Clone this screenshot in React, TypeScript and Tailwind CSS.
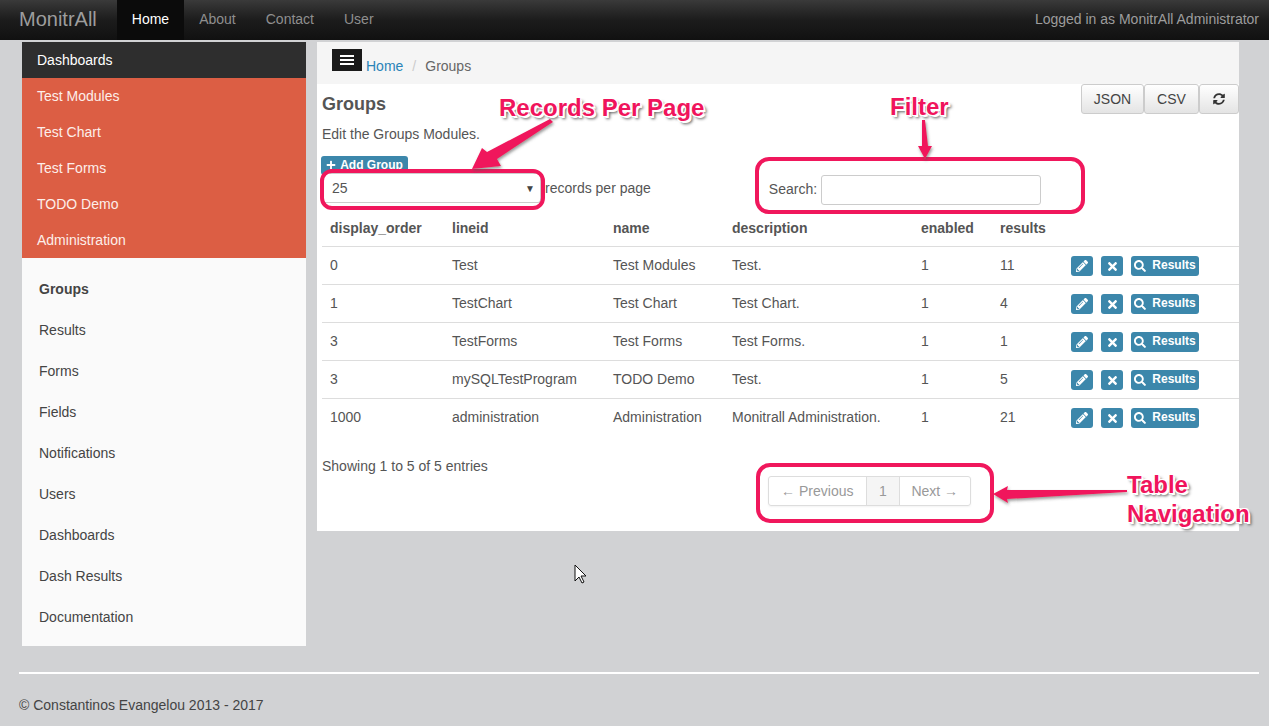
import React from "react";
import { FaPencilAlt, FaTimes, FaSearch, FaPlus, FaSyncAlt } from "react-icons/fa";

const rows = [
  ["0", "Test", "Test Modules", "Test.", "1", "11"],
  ["1", "TestChart", "Test Chart", "Test Chart.", "1", "4"],
  ["3", "TestForms", "Test Forms", "Test Forms.", "1", "1"],
  ["3", "mySQLTestProgram", "TODO Demo", "Test.", "1", "5"],
  ["1000", "administration", "Administration", "Monitrall Administration.", "1", "21"],
];
const heads = ["display_order", "lineid", "name", "description", "enabled", "results", ""];
const widths = ["w-[122px]", "w-[161px]", "w-[119px]", "w-[189px]", "w-[79px]", "w-[70px]", "w-auto"];
const orange = ["Test Modules", "Test Chart", "Test Forms", "TODO Demo", "Administration"];
const light = ["Results", "Forms", "Fields", "Notifications", "Users", "Dashboards", "Dash Results", "Documentation"];
const labelClass =
  "absolute font-bold text-[24px] leading-[29px] text-[#f0145c] whitespace-nowrap [text-shadow:-1px_-1px_0_#fff,1px_-1px_0_#fff,-1px_1px_0_#fff,1px_1px_0_#fff,2px_2px_0_#fff,3px_3px_3px_#555]";

function Blue({ children, className = "" }: { children: React.ReactNode; className?: string }) {
  return (
    <span className={`inline-flex items-center justify-center h-[19px] rounded-[3px] bg-[#3c87ab] text-white text-[12px] font-bold ${className}`}>
      {children}
    </span>
  );
}

export default function App() {
  return (
    <div className="relative h-[726px] overflow-hidden bg-[#d1d2d4] font-['Liberation_Sans',Arial,sans-serif] text-[14px] text-[#555]">
      <nav className="flex h-10 items-stretch bg-gradient-to-b from-[#3a3a3a] via-[#1c1c1c] to-[#111] pl-[19px] pr-[10px]">
        <div className="mr-5 flex items-center pb-[2px] text-[20px] text-[#9d9d9d]">MonitrAll</div>
        <div className="flex items-center bg-[#0b0b0b] px-[15px] pb-[2px] text-white">Home</div>
        {["About", "Contact", "User"].map((t) => (
          <div key={t} className="flex items-center px-[15px] pb-[2px] text-[#8f8f8f]">{t}</div>
        ))}
        <div className="ml-auto flex items-center pb-[2px] text-[#9d9d9d]">Logged in as MonitrAll Administrator</div>
      </nav>

      <div className="flex items-start pt-[2px] pl-[22px]">
        <aside className="w-[284px] shrink-0 bg-[#fafafa]">
          <div className="flex h-9 items-center bg-[#2e2e2e] pl-[15px] text-white">Dashboards</div>
          {orange.map((t) => (
            <div key={t} className="flex h-9 items-center bg-[#dc5e44] pl-[15px] text-[#fdeeea]">{t}</div>
          ))}
          <ul className="pt-[11px] pb-[8px] text-[#444]">
            <li className="flex h-[41px] items-center pl-[17px] font-bold">Groups</li>
            {light.map((t) => (
              <li key={t} className="flex h-[41px] items-center pl-[17px]">{t}</li>
            ))}
          </ul>
        </aside>

        <main className="ml-[11px] h-[489px] w-[922px] shrink-0 bg-white">
          <div className="flex h-[42px] items-start bg-[#f5f5f5] pl-[15px] pt-[7px]">
            <div className="flex h-[22px] w-[30px] flex-col items-center justify-center gap-[2px] bg-[#1a1a1a]">
              <span className="h-[2px] w-[14px] bg-white" />
              <span className="h-[2px] w-[14px] bg-white" />
              <span className="h-[2px] w-[14px] bg-white" />
            </div>
            <div className="ml-1 mt-[9px] flex leading-4">
              <span className="text-[#2a84b8]">Home</span>
              <span className="mx-[9px] text-[#ccc]">/</span>
              <span className="text-[#666]">Groups</span>
            </div>
          </div>

          <div className="flex h-[60px] items-start justify-between pl-[5px]">
            <div>
              <h2 className="mt-[10px] text-[18px] font-bold leading-5 text-[#555]">Groups</h2>
              <p className="mt-[10px] leading-5">Edit the Groups Modules.</p>
            </div>
            <div className="flex text-[#444]">
              {[["JSON", "w-[63px]"], ["CSV", "w-[55px]"]].map(([t, w]) => (
                <div key={t} className={`flex h-[30px] ${w} items-center justify-center rounded-[3px] border border-[#ccc] bg-gradient-to-b from-white to-[#e4e4e4]`}>{t}</div>
              ))}
              <div className="flex h-[30px] w-[40px] items-center justify-center rounded-[3px] border border-[#ccc] bg-gradient-to-b from-white to-[#e4e4e4]">
                <FaSyncAlt className="text-[12px] text-[#333]" />
              </div>
            </div>
          </div>

          <div className="mt-[12px] flex h-[19px] pl-1">
            <Blue className="w-[87px] gap-1 pb-[2px]">
              <FaPlus className="text-[10px]" /> Add Group
            </Blue>
          </div>
          <div className="relative -mt-[2px] flex h-[36px] items-start pl-[5px]">
            <div className="flex h-[30px] w-[219px] items-center justify-between rounded-[3px] border border-[#ccc] bg-white pl-[9px] pr-[5px]">
              <span>25</span>
              <span className="text-[10px] text-[#444]">▼</span>
            </div>
            <span className="ml-[4px] mt-[5px]">records per page</span>
            <div className="ml-[118px] mt-[2px] flex items-center">
              <span className="mr-[4px] pb-[2px]">Search:</span>
              <div className="h-[30px] w-[220px] rounded-[3px] border border-[#ccc] bg-white" />
            </div>
          </div>

          <table className="ml-[5px] w-[917px] table-fixed border-collapse">
            <thead>
              <tr className="h-[37px] border-b border-[#ddd] font-bold">
                {heads.map((h, i) => (
                  <th key={i} className={`${widths[i]} p-0 pl-2 pt-[2px] text-left`}>{h}</th>
                ))}
              </tr>
            </thead>
            <tbody>
              {rows.map((r, idx) => (
                <tr key={idx} className={`h-[38px] ${idx < 4 ? "border-b border-[#ddd]" : ""}`}>
                  {r.map((c, i) => (
                    <td key={i} className="p-0 pl-2">{c}</td>
                  ))}
                  <td className="p-0 pl-[9px] pt-[2px]">
                    <div className="flex items-center">
                      <Blue className="h-[20px] w-[22px] text-[11px]"><FaPencilAlt /></Blue>
                      <Blue className="ml-[8px] h-[20px] w-[22px] text-[13px]"><FaTimes /></Blue>
                      <Blue className="ml-[8px] h-[20px] w-[68px] gap-[6px] pb-[2px]"><FaSearch className="mt-[2px] text-[12px]" /> Results</Blue>
                    </div>
                  </td>
                </tr>
              ))}
            </tbody>
          </table>

          <div className="flex items-start pl-[5px] pt-[20px]">
            <span className="leading-5">Showing 1 to 5 of 5 entries</span>
            <div className="ml-[280px] mt-[20px] flex h-[30px] w-[203px] rounded-[3px] border border-[#ddd] text-[#999] shadow-[0_1px_2px_rgba(0,0,0,0.05)]">
              <div className="flex w-[98px] items-center justify-center border-r border-[#ddd]">← Previous</div>
              <div className="flex w-[33px] items-center justify-center border-r border-[#ddd] bg-[#f5f5f5]">1</div>
              <div className="flex flex-1 items-center justify-center">Next →</div>
            </div>
          </div>
        </main>
      </div>

      <footer className="ml-[19px] mr-[10px] mt-[26px] border-t-2 border-white pt-[21px] text-[#444]">
        © Constantinos Evangelou 2013 - 2017
      </footer>

      {/* annotations over the page */}
      <div className="pointer-events-none absolute left-[320px] top-[169px] h-[41px] w-[225px] rounded-[12px] border-4 border-[#f0175c]" />
      <div className="pointer-events-none absolute left-[755px] top-[157px] h-[57px] w-[330px] rounded-[14px] border-4 border-[#f0175c]" />
      <div className="pointer-events-none absolute left-[756px] top-[463px] h-[60px] w-[238px] rounded-[14px] border-4 border-[#f0175c]" />
      <svg className="pointer-events-none absolute left-0 top-0" width="1269" height="726">
        <defs>
          <filter id="s" x="-20%" y="-20%" width="140%" height="140%">
            <feDropShadow dx="1" dy="2" stdDeviation="1.5" floodColor="#555" floodOpacity="0.6" />
          </filter>
        </defs>
        <g fill="#f0175c" filter="url(#s)">
          <polygon points="550,119 553,122 497,159 501,166 472,169 482,148 487,152" />
          <polygon points="922,120 925,120 928,146 932,146 925,159 918,146 922,146" />
          <polygon points="1127,490 1127,492 1007,499 1008,503 993,494 1008,486 1007,490" />
        </g>
        <path d="M575 565 L575 581 L579 577 L582 583 L584 582 L581 576 L586 576 Z" fill="#fff" stroke="#111" strokeWidth="1" />
      </svg>
      <div className={`${labelClass} left-[499px] top-[93px]`}>Records Per Page</div>
      <div className={`${labelClass} left-[890px] top-[92px]`}>Filter</div>
      <div className={`${labelClass} left-[1127px] top-[470px]`}>Table</div>
      <div className={`${labelClass} left-[1127px] top-[499px]`}>Navigation</div>
    </div>
  );
}
